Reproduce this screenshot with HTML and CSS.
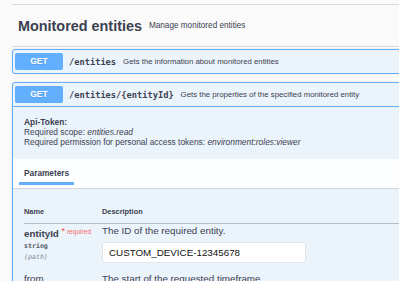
FILE: index.html
```html
<!DOCTYPE html>
<html lang="en">
<head>
    <meta charset="UTF-8">
    <meta name="viewport" content="width=device-width, initial-scale=1.0">
    <title>Monitored entities</title>
    <link rel="stylesheet" href="styles.css">
</head>
<body>

<div class="page">
    <!-- Tag header -->
    <h3 class="tag-header">
        <span class="tag-title">Monitored entities</span>
        <small class="tag-desc">Manage monitored entities</small>
    </h3>

    <!-- Collapsed operation -->
    <div class="opblock">
        <div class="opblock-summary">
            <span class="method">GET</span>
            <span class="path">/entities</span>
            <span class="summary-text">Gets the information about monitored entities</span>
        </div>
    </div>

    <!-- Expanded operation -->
    <div class="opblock is-open">
        <div class="opblock-summary">
            <span class="method">GET</span>
            <span class="path">/entities/{entityId}</span>
            <span class="summary-text">Gets the properties of the specified monitored entity</span>
        </div>

        <div class="opblock-body">
            <div class="api-token">
                <b>Api-Token:</b><br>
                Required scope: <i>entities.read</i><br>
                Required permission for personal access tokens: <i>environment:roles:viewer</i>
            </div>

            <div class="section-header">
                <span class="tab">Parameters</span>
            </div>

            <div class="params">
                <div class="params-head">
                    <span class="col-name">Name</span>
                    <span class="col-desc">Description</span>
                </div>

                <div class="param-row">
                    <div class="col-name">
                        <div class="param-name">entityId <span class="req"><span class="star">*</span> required</span></div>
                        <div class="param-type">string</div>
                        <div class="param-in">(path)</div>
                    </div>
                    <div class="col-desc">
                        <div class="param-text">The ID of the required entity.</div>
                        <div class="param-input">CUSTOM_DEVICE-12345678</div>
                    </div>
                </div>

                <div class="param-row">
                    <div class="col-name">
                        <div class="param-name plain">from</div>
                    </div>
                    <div class="col-desc">
                        <div class="param-text">The start of the requested timeframe.</div>
                    </div>
                </div>
            </div>
        </div>
    </div>
</div>

</body>
</html>
```

FILE: styles.css
```css
/* General */
body {
    margin: 0;
    background: #fafafa;
    font-family: 'Liberation Sans', Arial, sans-serif;
    color: #3b4151;
    overflow: hidden;
    height: 281px;
}

.page {
    width: 430px;
    margin-left: 12px;
    padding-top: 4px;
}

/* Tag header */
.tag-header {
    margin: 0;
    display: flex;
    align-items: center;
    height: 41px;
    padding-left: 6px;
    border-top: 1px solid #d8dadd;
    border-bottom: 1px solid #d8dadd;
}

.tag-title {
    font-size: 14.4px;
    font-weight: bold;
    color: #3b4151;
}

.tag-desc {
    font-size: 8.2px;
    font-weight: normal;
    margin-left: 7px;
    color: #3b4151;
}

/* Operation blocks */
.opblock {
    margin-top: 2px;
    margin-bottom: 8px;
    border: 1px solid #61affe;
    border-radius: 3px;
    background: #ebf3fb;
    box-shadow: 0 0 2px rgba(0, 0, 0, 0.12);
}

.opblock + .opblock {
    margin-top: 0;
}

.opblock-summary {
    display: flex;
    align-items: center;
    padding: 3px 2px;
}

.is-open .opblock-summary {
    border-bottom: 1px solid #61affe;
}

.method {
    width: 48px;
    height: 17px;
    line-height: 17px;
    text-align: center;
    background: #61affe;
    color: #fff;
    font-size: 8.5px;
    font-weight: bold;
    border-radius: 2px;
    text-shadow: 0 1px 0 rgba(0, 0, 0, 0.1);
}

.path {
    margin-left: 6px;
    font-family: 'DejaVu Sans Mono', monospace;
    font-weight: bold;
    font-size: 8.7px;
    color: #3b4151;
}

.summary-text {
    margin-left: 7px;
    font-size: 7.8px;
    color: #3b4151;
}

/* Body */
.api-token {
    padding: 10px 11px 12px;
    font-size: 8.4px;
    line-height: 10px;
}

.section-header {
    height: 29px;
    padding-left: 6px;
    background: rgba(255, 255, 255, 0.85);
    box-shadow: 0 1px 1px rgba(0, 0, 0, 0.1);
    display: flex;
}

.tab {
    padding: 9px 5px 0;
    width: 45px;
    font-size: 8.3px;
    font-weight: bold;
    border-bottom: 3px solid #61affe;
    height: 14px;
}

.params {
    padding: 19px 11px 0;
}

.params-head {
    display: flex;
    font-size: 7.4px;
    font-weight: bold;
    padding-bottom: 7px;
    border-bottom: 1px solid #b8bcc4;
}

.col-name {
    width: 78px;
}

.col-desc {
    flex: 1;
}

.param-row {
    display: flex;
    padding-top: 1px;
}

.param-name {
    font-size: 9.8px;
    font-weight: bold;
    line-height: 12px;
}

.param-name.plain {
    font-weight: normal;
}

.req {
    font-size: 6.6px;
    font-weight: normal;
    color: #f86b6b;
    vertical-align: 3px;
}

.star {
    font-size: 9px;
    color: #f93e3e;
}

.param-type {
    margin-top: 2px;
    font-family: 'DejaVu Sans Mono', monospace;
    font-size: 6.6px;
    font-weight: bold;
    color: #555a66;
}

.param-in {
    margin-top: 3px;
    font-family: 'DejaVu Sans Mono', monospace;
    font-size: 6.6px;
    font-style: italic;
    color: #7d8293;
}

.param-text {
    font-size: 9.8px;
    line-height: 12px;
}

.param-input {
    margin-top: 5px;
    width: 196px;
    height: 19px;
    line-height: 19px;
    padding-left: 6px;
    background: #fff;
    border: 1px solid #e2e6ea;
    border-radius: 3px;
    font-size: 9.8px;
    color: #111;
    margin-bottom: 9px;
}
```
